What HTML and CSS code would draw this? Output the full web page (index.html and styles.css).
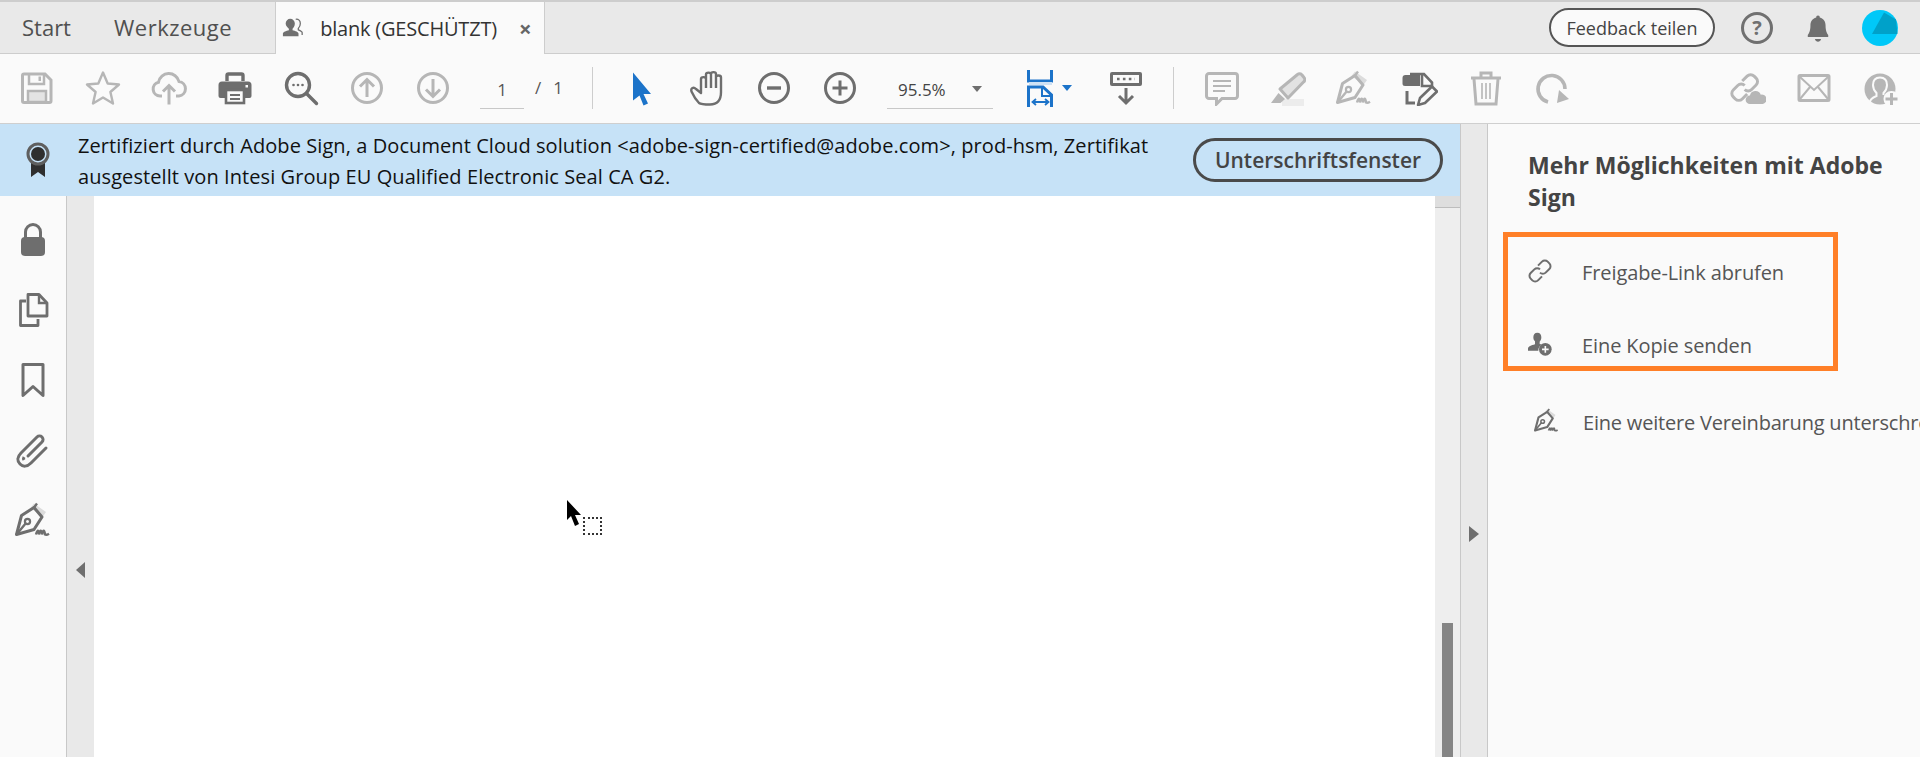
FILE: index.html
```html
<!DOCTYPE html>
<html lang="de">
<head>
<meta charset="utf-8">
<title>blank (GESCHÜTZT)</title>
<link rel="stylesheet" href="styles.css">
</head>
<body>
<svg class="defs" width="0" height="0" aria-hidden="true">
  <defs>
    <symbol id="pen" viewBox="0 0 36 36">
      <path d="M19 1.500l12 8.500-3.500 5-12-9z" fill="#dcdcdc"/>
      <path d="M1.500 32.500L6.500 13.500 19 5.500 27 15 19 27.500z" fill="none" stroke="currentColor" stroke-width="3" stroke-linejoin="round"/>
      <path d="M19 5.500L22 1.500M1.500 32.500L11 21" fill="none" stroke="currentColor" stroke-width="2.400"/>
      <circle cx="12.500" cy="19.500" r="2.600" fill="none" stroke="currentColor" stroke-width="2.200"/>
      <path d="M21 32.500c1.500-5 2.500-5 3 0 1-5 2.500-5 3 0 1-5 2.500-5 3 0 1 .6 2.500.2 4-.8" fill="none" stroke="currentColor" stroke-width="2.400"/>
    </symbol>
    <symbol id="link" viewBox="0 0 36 36">
      <g fill="none" stroke="currentColor">
        <path d="M15 10l6-6a6 6 0 0 1 8.500 0l2.500 2.500a6 6 0 0 1 0 8.500l-5.500 5.500a6 6 0 0 1-8.500 0"/>
        <path d="M21 26l-6 6a6 6 0 0 1-8.500 0L4 29.500a6 6 0 0 1 0-8.500l5.500-5.500a6 6 0 0 1 8.500 0"/>
      </g>
    </symbol>
  </defs>
</svg>

<header class="tabbar">
  <a class="navtab">Start</a>
  <a class="navtab navtab-tools">Werkzeuge</a>
  <div class="doctab">
    <svg class="doctab-icon" viewBox="0 0 24 24"><path d="M9 2a5 5 0 0 1 5 5c0 2.500-1.200 4.500-2.500 5.800v1.700c3 .8 6.500 2 6.500 3.500V21H1v-3c0-1.500 3.500-2.700 6.500-3.500v-1.700C6.200 11.500 4 9.500 4 7a5 5 0 0 1 5-5z" fill="currentColor"/><path d="M15 2.500c3-.5 5 1.500 5 4.500 0 2-.8 4-2.200 5.400v1.600c2 .8 4.200 1.800 4.200 3v2.500" fill="none" stroke="currentColor" stroke-width="1.400"/></svg>
    <span class="doctab-name">blank (GESCHÜTZT)</span>
    <span class="doctab-close">×</span>
  </div>
  <div class="tabbar-right">
    <button class="feedback">Feedback teilen</button>
    <span class="topicon help">?</span>
    <svg class="topicon-svg" viewBox="0 0 36 36"><path d="M18 4c-1.500 0-2 1-2 2.200C11.500 7.500 9.500 11 9.500 15c0 6-1.500 9-3 11v2h23v-2c-1.500-2-3-5-3-11 0-4-2-7.500-6.500-8.800C20 5 19.500 4 18 4z" fill="currentColor"/><path d="M14.500 30.500h7c-.5 2-2 3-3.500 3s-3-1-3.500-3z" fill="currentColor"/></svg>
    <svg class="avatar" viewBox="0 0 36 36"><ellipse cx="18" cy="18" rx="18" ry="18" fill="#00c8f8"/><path d="M22 2.500l12 7 1.500 14.500H10z" fill="#00a1c9"/></svg>
  </div>
</header>

<nav class="toolbar">
  <div class="slot off"><svg viewBox="0 0 36 36"><path d="M5 4h21l6 6v21a1.500 1.500 0 0 1-1.500 1.500H5A1.500 1.500 0 0 1 3.500 31V5.500A1.500 1.500 0 0 1 5 4z" fill="none" stroke="currentColor" stroke-width="3"/><path d="M10 4v10h15V4" fill="none" stroke="currentColor" stroke-width="2.500"/><rect x="19.500" y="6.500" width="2.500" height="4.500" fill="currentColor"/><path d="M9 32V21h18v11z" fill="#e4e4e4" stroke="currentColor" stroke-width="2.500"/></svg></div>
  <div class="slot off"><svg viewBox="0 0 36 36"><path d="M18 2.500l4.700 11 11.300 1-8.600 7.500 2.600 11.500L18 27.500 8 33.500l2.600-11.500L2 14.500l11.300-1z" fill="none" stroke="currentColor" stroke-width="2.400" stroke-linejoin="round"/></svg></div>
  <div class="slot off"><svg viewBox="0 0 36 36"><path d="M11 26H9a7 7 0 0 1-1.500-13.800A10.500 10.500 0 0 1 28 11.500a7.300 7.300 0 0 1 0 14.500h-3" fill="none" stroke="currentColor" stroke-width="3"/><path d="M18 34.500V15.500M12 21.500l6-6 6 6" fill="none" stroke="currentColor" stroke-width="3"/></svg></div>
  <div class="slot on"><svg viewBox="0 0 36 36"><path d="M10 11V5.500A1.500 1.500 0 0 1 11.500 4h13A1.500 1.500 0 0 1 26 5.500V11" fill="none" stroke="currentColor" stroke-width="3.400"/><path d="M5 11.500h26a3.500 3.500 0 0 1 3.500 3.500v11a2 2 0 0 1-2 2H3.500a2 2 0 0 1-2-2V15A3.500 3.500 0 0 1 5 11.500z" fill="currentColor"/><rect x="9" y="20" width="18" height="13" fill="#fafafa" stroke="currentColor" stroke-width="2.600"/><path d="M13 25h10M13 29h10" stroke="currentColor" stroke-width="1.800"/><rect x="28.500" y="15" width="2.500" height="2.500" fill="#fafafa"/></svg></div>
  <div class="slot on"><svg viewBox="0 0 36 36"><circle cx="15" cy="15" r="11.500" fill="none" stroke="currentColor" stroke-width="3.400"/><path d="M23.500 23.500l10 10" stroke="currentColor" stroke-width="3.400" stroke-linecap="round"/><circle cx="10.500" cy="15" r="1.300" fill="currentColor"/><circle cx="15" cy="15" r="1.300" fill="currentColor"/><circle cx="19.500" cy="15" r="1.300" fill="currentColor"/></svg></div>
  <div class="slot off"><svg viewBox="0 0 36 36"><circle cx="18" cy="18" r="14.500" fill="none" stroke="currentColor" stroke-width="3"/><path d="M18 27V10M11 16.500l7-7 7 7" fill="none" stroke="currentColor" stroke-width="3"/></svg></div>
  <div class="slot off"><svg viewBox="0 0 36 36"><circle cx="18" cy="18" r="14.500" fill="none" stroke="currentColor" stroke-width="3"/><path d="M18 9v17M11 19.500l7 7 7-7" fill="none" stroke="currentColor" stroke-width="3"/></svg></div>
  <div class="pager"><span class="pager-input">1</span><span class="pager-sep">/</span><span class="pager-total">1</span></div>
  <div class="tb-divider tb-divider-a"></div>
  <div class="slot blue"><svg viewBox="0 0 36 36"><path d="M9 2.500L27 24h-7.500l4.500 9.500-4.500 2-4-10-6.500 5z" fill="currentColor"/></svg></div>
  <div class="slot on"><svg viewBox="0 0 36 36"><path d="M9 33C6 30 4 27 1.500 21.500 .5 18 3.500 16.500 6 19l5 4V9c0-2.500 5-2.500 5 0V4.500c0-2.500 5-2.500 5 0V4c0-2.500 5-2.500 5 0v3c0-2 5-2 5 .5V22c0 6-2 12.500-11 12.500-5 0-9 0-11-1.500zM16 9v9M21 4.500V18M26 7v11" fill="none" stroke="currentColor" stroke-width="2.400" stroke-linejoin="round"/></svg></div>
  <div class="slot on"><svg viewBox="0 0 36 36"><circle cx="18" cy="18" r="14.500" fill="none" stroke="currentColor" stroke-width="3"/><path d="M11 18h14" stroke="currentColor" stroke-width="3.400"/></svg></div>
  <div class="slot on"><svg viewBox="0 0 36 36"><circle cx="18" cy="18" r="14.500" fill="none" stroke="currentColor" stroke-width="3"/><path d="M10.500 18h15M18 10.500v15" stroke="currentColor" stroke-width="3"/></svg></div>
  <div class="zoombox"><span>95.5%</span><i class="caret-gray"></i></div>
  <div class="fit"><svg viewBox="0 0 28 38"><path d="M2.500 1v11h23V1" fill="none" stroke="currentColor" stroke-width="3"/><rect x="3" y="13" width="23" height="3" fill="#cfe2f5"/><path d="M2.500 38V18H17l8.500 8v12" fill="none" stroke="currentColor" stroke-width="3"/><path d="M16 18v9h9.500" fill="none" stroke="currentColor" stroke-width="2"/><path d="M7 33h15M10 30l-3.500 3 3.500 3M19 30l3.500 3-3.500 3" fill="none" stroke="currentColor" stroke-width="1.800"/></svg><i class="caret-blue"></i></div>
  <div class="slot on slot-key"><svg viewBox="0 0 36 36"><rect x="2" y="2" width="32" height="14" rx="2" fill="currentColor"/><rect x="5" y="5" width="26" height="8" fill="#fafafa"/><path d="M9 9h18" stroke="currentColor" stroke-width="2.600" stroke-dasharray="2.600 3.300"/><path d="M18 18v15M11 26l7 7 7-7" fill="none" stroke="currentColor" stroke-width="3"/></svg></div>
  <div class="tb-divider tb-divider-b"></div>
  <div class="slot off"><svg viewBox="0 0 36 36"><path d="M5 3.500h26A2.500 2.500 0 0 1 33.500 6v20a2.500 2.500 0 0 1-2.500 2.500H18l-5.500 5.500v-5.500H5A2.500 2.500 0 0 1 2.500 26V6A2.500 2.500 0 0 1 5 3.500z" fill="none" stroke="currentColor" stroke-width="3"/><path d="M9 11h18M9 16h18M9 21h12" stroke="currentColor" stroke-width="2"/></svg></div>
  <div class="slot off"><svg viewBox="0 0 36 36"><rect x="12" y="29" width="22" height="7" fill="#ececec"/><path d="M10 19L27.500 4.500a3 3 0 0 1 4.500.5l2 2.500a3 3 0 0 1-.5 4.500L18 28z" fill="#e2e2e2" stroke="currentColor" stroke-width="3" stroke-linejoin="round"/><path d="M8.500 23l6.500 6-4.500 4H1z" fill="currentColor"/></svg></div>
  <div class="slot off"><svg><use href="#pen"/></svg></div>
  <div class="slot on"><svg viewBox="0 0 36 36"><path d="M3.500 5H18v11H3a2.500 2.500 0 0 1-2.500-2.500V8A3 3 0 0 1 3.500 5z" fill="currentColor"/><path d="M8 4h14l8 8.500v3.500H20V5" fill="none" stroke="currentColor" stroke-width="2.600"/><path d="M5 21v12h8" fill="none" stroke="currentColor" stroke-width="3"/><path d="M16 35l2-7L30 16.500l5 5L23 33z" fill="none" stroke="currentColor" stroke-width="2.600" stroke-linejoin="round"/></svg></div>
  <div class="slot off"><svg viewBox="0 0 36 36"><path d="M3 8h30M13 7V3h10v4" fill="none" stroke="currentColor" stroke-width="3"/><path d="M6 9l2 25h20l2-25" fill="none" stroke="currentColor" stroke-width="3"/><path d="M14 13v16M18 13v16M22 13v16" stroke="currentColor" stroke-width="1.600"/></svg></div>
  <div class="slot off"><svg viewBox="0 0 36 36"><path d="M14 32A13.500 13.500 0 1 1 31 19" fill="none" stroke="currentColor" stroke-width="3.600"/><path d="M23 33l2-13 10 9z" fill="currentColor"/></svg></div>
  <div class="tb-right">
    <div class="slot off"><svg class="link-big" viewBox="0 0 38 36"><use href="#link" width="31" height="31" x="0" y="2"/><path d="M21 35a4.500 4.500 0 0 1 0-9 6 6 0 0 1 11.500-1 5 5 0 0 1 2 10z" fill="currentColor"/></svg></div>
    <div class="slot off"><svg viewBox="0 0 36 36"><rect x="3" y="5.500" width="30" height="25" rx="1" fill="none" stroke="currentColor" stroke-width="3"/><path d="M4 7l14 13L32 7M4 29l10-12M32 29L22 17" fill="none" stroke="currentColor" stroke-width="2"/></svg></div>
    <div class="slot off"><svg viewBox="0 0 36 36"><circle cx="18" cy="19" r="15.500" fill="currentColor"/><path d="M8 32c0-3 4-5 6.500-6v-3c-2-2-3.500-5-3.500-8 0-5 3-7.500 7-7.500s7 2.500 7 7.500c0 3-1.500 6-3.500 8v2" fill="none" stroke="#fafafa" stroke-width="2"/><circle cx="29.500" cy="29" r="8" fill="#fafafa"/><path d="M29.500 23v12M23.500 29h12" stroke="currentColor" stroke-width="3"/></svg></div>
  </div>
</nav>

<main class="workspace">
  <section class="viewer">
    <div class="banner">
      <svg class="seal" viewBox="0 0 24 36"><path d="M5 20v15l7-5 7 5V20z" fill="#2f2f2f"/><circle cx="12" cy="12" r="10" fill="#c6e2f7" stroke="#5f5f5f" stroke-width="3"/><circle cx="12" cy="12" r="7" fill="#2f2f2f"/></svg>
      <p class="banner-text">Zertifiziert durch Adobe Sign, a Document Cloud solution &lt;adobe-sign-certified@adobe.com&gt;, prod-hsm, Zertifikat ausgestellt von Intesi Group EU Qualified Electronic Seal CA G2.</p>
      <button class="sigbtn">Unterschriftsfenster</button>
    </div>
    <div class="docarea">
      <aside class="rail">
        <svg viewBox="0 0 36 36"><path d="M10.500 16V10a7.500 7.500 0 0 1 15 0v6" fill="none" stroke="currentColor" stroke-width="3"/><rect x="6" y="15" width="24" height="19" rx="4" fill="currentColor"/></svg>
        <svg viewBox="0 0 36 36"><path d="M13 2.500h11l8 8.500v13H13z" fill="none" stroke="currentColor" stroke-width="2.800" stroke-linejoin="round"/><path d="M24 2.500v8.500h8" fill="none" stroke="currentColor" stroke-width="2.400"/><path d="M11 9H5.500v24.500H23V27" fill="none" stroke="currentColor" stroke-width="2.800" stroke-linejoin="round"/></svg>
        <svg viewBox="0 0 36 36"><path d="M8 2.500h20v31L18 24.500 8 33.500z" fill="none" stroke="currentColor" stroke-width="3" stroke-linejoin="round"/></svg>
        <svg viewBox="0 0 36 36"><path d="M13 24l14-14a3.500 3.500 0 0 0-5-5L6 21c-4 4-4 8-1 11s7 3 11-1l15-15" fill="none" stroke="currentColor" stroke-width="3" stroke-linecap="round"/><path d="M9 28a3 3 0 0 1 0-3" fill="none" stroke="currentColor" stroke-width="3"/></svg>
        <svg><use href="#pen"/></svg>
      </aside>
      <div class="gutter gutter-left"><i class="arrow-left"></i></div>
      <div class="page">
        <div class="cursor">
          <svg class="cursor-arrow" viewBox="0 0 15 26"><path d="M0 0l14 15H8l4 9-4 2-4-10-4 4z" fill="#000"/></svg>
          <span class="cursor-box"></span>
        </div>
      </div>
      <div class="scrollbar"><span class="scroll-top"></span><span class="scroll-thumb"></span></div>
    </div>
  </section>
  <div class="gutter gutter-right"><i class="arrow-right"></i></div>
  <aside class="panel">
    <h2 class="panel-title">Mehr Möglichkeiten mit Adobe Sign</h2>
    <div class="highlight">
      <div class="action action-link"><svg class="action-icon" viewBox="0 0 36 36"><use href="#link"/></svg><span>Freigabe-Link abrufen</span></div>
      <div class="action action-copy"><svg class="action-icon" viewBox="0 0 36 36"><path d="M14 1c4 0 6 3 6 7 0 3-1 5-2.500 6.500v3.500c1 .3 2 .6 3 1.100a10 10 0 0 0-5 8.900H0v-3c0-3 5-5 10.500-6.500v-4.500C9 12.500 8 11 8 8c0-4 2-7 6-7z" fill="currentColor"/><circle cx="26" cy="26" r="9.500" fill="currentColor"/><path d="M21 26h10M26 21v10" stroke="#fafafa" stroke-width="2.400"/></svg><span>Eine Kopie senden</span></div>
    </div>
    <div class="action action-sign"><svg class="action-icon"><use href="#pen"/></svg><span>Eine weitere Vereinbarung unterschreiben</span></div>
  </aside>
</main>
</body>
</html>
```

FILE: styles.css
```css
* { box-sizing: border-box; }
html, body { margin: 0; height: 100%; }
body {
  display: flex;
  flex-direction: column;
  height: 757px;
  overflow: hidden;
  font-family: "Open Sans", "Noto Sans", sans-serif;
  background: #fafafa;
  color: #4b4b4b;
}
.defs { position: absolute; }
p, h2 { margin: 0; }
svg { display: block; }

/* tab bar */
.tabbar {
  display: flex;
  align-items: stretch;
  height: 54px;
  flex: none;
  background: #e9e9e9;
  border-top: 2px solid #cdcdcd;
  border-bottom: 1px solid #cdcdcd;
  padding-left: 22px;
}
.navtab {
  font-size: 22px;
  line-height: 51px;
  color: #505050;
}
.navtab-tools { margin-left: 43px; letter-spacing: 0.5px; }
.doctab {
  display: flex;
  align-items: center;
  width: 270px;
  margin-left: 43px;
  margin-bottom: -1px;
  padding-left: 6px;
  background: #fafafa;
  border-left: 1px solid #cdcdcd;
  border-right: 1px solid #cdcdcd;
  color: #333;
}
.doctab-icon { width: 22px; height: 22px; color: #707070; }
.doctab-name { margin-left: 16px; font-size: 20px; letter-spacing: -0.2px; }
.doctab-close { margin-left: 22px; font-size: 22px; font-weight: 700; color: #666; line-height: 1; }
.tabbar-right {
  display: flex;
  align-items: center;
  margin-left: auto;
}
.feedback {
  width: 166px;
  height: 39px;
  margin-right: 26px;
  padding: 0;
  border: 2px solid #555;
  border-radius: 20px;
  background: #fafafa;
  font: 18px "Open Sans", sans-serif;
  color: #444;
}
.topicon {
  width: 32px;
  height: 32px;
  border: 3px solid #707070;
  border-radius: 50%;
  font-size: 20px;
  font-weight: 700;
  line-height: 26px;
  text-align: center;
  color: #707070;
}
.topicon-svg { width: 32px; height: 36px; margin-left: 29px; color: #707070; }
.avatar { width: 36px; height: 36px; margin: 0 22px 0 28px; }

/* toolbar */
.toolbar {
  display: flex;
  align-items: center;
  height: 70px;
  flex: none;
  padding: 0 0 2px 4px;
  background: #fafafa;
  border-bottom: 1px solid #cfcfcf;
}
.slot {
  display: flex;
  justify-content: center;
  width: 66px;
  flex: none;
}
.slot svg { width: 36px; height: 36px; }
.link-big { stroke-width: 3.6; }
.off { color: #b6b6b6; }
.on { color: #6e6e6e; }
.blue { color: #1c73c9; }
.pager {
  display: flex;
  align-items: center;
  margin-left: 14px;
  font-size: 17px;
  color: #555;
}
.pager-input {
  width: 44px;
  height: 34px;
  line-height: 30px;
  margin-top: 8px;
  text-align: center;
  border-bottom: 1px solid #c8c8c8;
}
.pager-sep { margin-left: 11px; }
.pager-total { margin-left: 12px; }
.tb-divider { width: 1px; height: 42px; background: #cdcdcd; flex: none; }
.tb-divider-a { margin-left: 29px; margin-right: 16px; }
.tb-divider-b { margin-left: 14px; margin-right: 15px; }
.zoombox {
  display: flex;
  align-items: center;
  justify-content: space-between;
  width: 106px;
  height: 34px;
  margin-top: 8px;
  margin-left: 14px;
  padding: 0 11px 4px;
  font-size: 17px;
  border-bottom: 1px solid #c8c8c8;
  color: #444;
}
.caret-gray {
  width: 0; height: 0;
  border: 5px solid transparent;
  border-top: 6px solid #6e6e6e;
  border-bottom: 0;
}
.fit {
  display: flex;
  align-items: center;
  width: 54px;
  margin-left: 33px;
  color: #1c73c9;
}
.fit svg { width: 28px; height: 38px; }
.caret-blue {
  width: 0; height: 0;
  margin-left: 8px;
  border: 5px solid transparent;
  border-top: 6px solid #1c73c9;
  border-bottom: 0;
}
.slot-key { margin-left: 13px; }
.tb-right { display: flex; margin-left: auto; padding-right: 7px; }

/* workspace */
.workspace { display: flex; flex: 1; min-height: 0; overflow: hidden; }
.viewer { display: flex; flex-direction: column; width: 1460px; flex: none; }
.banner {
  display: flex;
  align-items: center;
  height: 72px;
  flex: none;
  padding: 0 17px 0 26px;
  background: #c6e2f7;
}
.seal { width: 24px; height: 36px; flex: none; }
.banner-text {
  width: 1085px;
  margin-left: 28px;
  padding-top: 2px;
  font-size: 20px;
  line-height: 31px;
  letter-spacing: 0.08px;
  color: #111;
}
.sigbtn {
  width: 250px;
  height: 44px;
  margin-left: auto;
  padding: 0;
  border: 3px solid #4a4a4a;
  border-radius: 22px;
  background: #c6e2f7;
  font: 600 21px "Open Sans", sans-serif;
  color: #444;
}
.docarea { display: flex; flex: 1; min-height: 0; }
.rail {
  display: flex;
  flex-direction: column;
  align-items: center;
  gap: 34px;
  width: 66px;
  flex: none;
  padding-top: 26px;
  background: #fafafa;
  color: #6e6e6e;
}
.rail svg { width: 36px; height: 36px; flex: none; }
.gutter {
  display: flex;
  align-items: flex-start;
  justify-content: center;
  width: 28px;
  flex: none;
  background: #e9e9e9;
  border-left: 1px solid #c8c8c8;
}
.gutter-left { padding-top: 366px; }
.gutter-right { border-right: 1px solid #c8c8c8; padding-top: 402px; }
.arrow-left {
  width: 0; height: 0;
  border: 8px solid transparent;
  border-right: 9px solid #6e6e6e;
  border-left: 0;
}
.arrow-right {
  width: 0; height: 0;
  border: 8px solid transparent;
  border-left: 10px solid #6e6e6e;
  border-right: 0;
}
.page { position: relative; flex: 1; background: #fff; }
.cursor { position: absolute; left: 473px; top: 304px; }
.cursor-arrow { width: 15px; height: 26px; }
.cursor-box {
  position: absolute;
  left: 16px;
  top: 17px;
  width: 19px;
  height: 18px;
  border: 2px dotted #333;
}
.scrollbar {
  position: relative;
  width: 25px;
  flex: none;
  background: #eeeeee;
}
.scroll-top {
  display: block;
  height: 12px;
  width: 25px;
  background: #dedede;
  border-bottom: 1px solid #bdbdbd;
}
.scroll-thumb {
  position: absolute;
  left: 7px;
  top: 427px;
  width: 11px;
  height: 134px;
  background: #858585;
}

/* panel */
.panel {
  flex: 1;
  min-width: 0;
  overflow: hidden;
  padding: 25px 0 0 15px;
  background: #fafafa;
}
.panel-title {
  width: 370px;
  margin-left: 25px;
  font-size: 23px;
  line-height: 32px;
  font-weight: 700;
  color: #444;
}
.highlight {
  display: flex;
  flex-direction: column;
  gap: 45px;
  width: 335px;
  height: 139px;
  margin-top: 19px;
  padding: 21px 0 0 20px;
  border: 5px solid #ff7f27;
}
.action {
  display: flex;
  align-items: center;
  height: 28px;
  white-space: nowrap;
  font-size: 20px;
  letter-spacing: -0.1px;
  color: #555;
}
.action-icon { width: 24px; height: 24px; flex: none; margin-bottom: 3px; color: #6e6e6e; stroke-width: 3; }
.action-icon + span { margin-left: 30px; }
.action-sign { margin-top: 37px; padding-left: 31px; letter-spacing: -0.2px; }
.action-sign .action-icon { width: 25px; height: 25px; }
.action-sign .action-icon + span { margin-left: 24px; }
```
